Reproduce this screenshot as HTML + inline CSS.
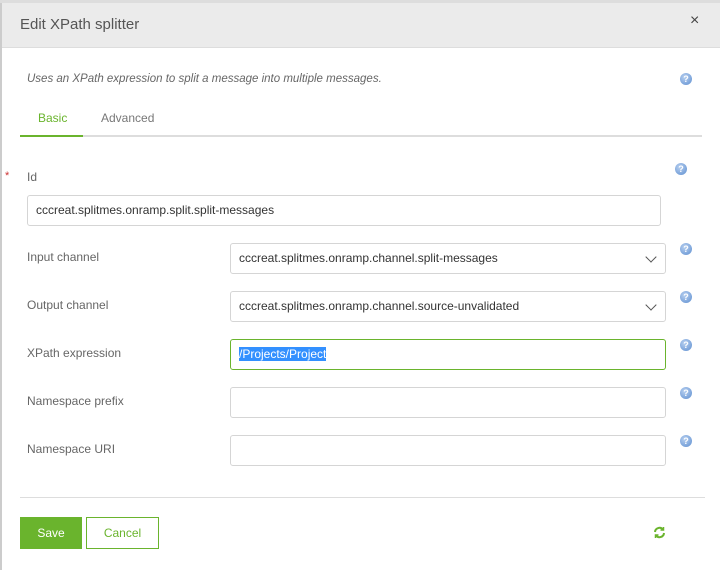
<!DOCTYPE html>
<html><head><style>
body{margin:0;width:720px;height:570px;overflow:hidden;background:#fff;font-family:"Liberation Sans",sans-serif;position:relative}
.a{position:absolute}
.lbl{position:absolute;left:27px;font-size:12px;color:#666}
.inp{position:absolute;border:1px solid #d5d5d5;border-radius:3px;box-sizing:border-box;height:31px;font-size:12px;color:#333;padding:0 8px;line-height:29px}
.h{position:absolute;width:12px;height:12px;border-radius:50%;background:radial-gradient(circle at 40% 35%,#b8d0f0,#5d8ed0);color:#fff;font-size:9px;font-weight:bold;text-align:center;line-height:12px}
.chev{position:absolute;right:10px;top:9px;width:7px;height:7px;border-right:1.5px solid #555;border-bottom:1.5px solid #555;transform:rotate(45deg)}
</style></head><body>
<div class="a" style="left:0;top:0;width:2px;height:570px;background:#ccc"></div>
<div class="a" style="left:0;top:0;width:720px;height:3px;background:#ddd"></div>
<div class="a" style="left:2px;top:3px;width:718px;height:44px;background:#ebebeb;border-bottom:1px solid #ddd"></div>
<div class="a" style="left:20px;top:16px;font-size:15px;color:#555">Edit XPath splitter</div>
<div class="a" style="left:690px;top:12px;font-size:16px;color:#444">×</div>
<div class="a" style="left:27px;top:73px;font-size:11.5px;font-style:italic;color:#666">Uses an XPath expression to split a message into multiple messages.</div>
<div class="h" style="left:680px;top:73px">?</div>
<div class="a" style="left:38px;top:111px;font-size:12px;color:#6ab42d">Basic</div>
<div class="a" style="left:101px;top:111px;font-size:12px;color:#777">Advanced</div>
<div class="a" style="left:20px;top:135px;width:682px;height:2px;background:#ddd"></div>
<div class="a" style="left:20px;top:135px;width:63px;height:2px;background:#6ab42d"></div>
<div class="a" style="left:5px;top:170px;color:#c33;font-size:11px">*</div>
<div class="lbl" style="top:170px">Id</div>
<div class="h" style="left:675px;top:163px">?</div>
<div class="inp" style="left:27px;top:195px;width:634px">cccreat.splitmes.onramp.split.split-messages</div>
<div class="lbl" style="top:250px">Input channel</div>
<div class="inp" style="left:230px;top:243px;width:436px">cccreat.splitmes.onramp.channel.split-messages<div class="chev"></div></div>
<div class="h" style="left:680px;top:243px">?</div>
<div class="lbl" style="top:298px">Output channel</div>
<div class="inp" style="left:230px;top:291px;width:436px">cccreat.splitmes.onramp.channel.source-unvalidated<div class="chev"></div></div>
<div class="h" style="left:680px;top:291px">?</div>
<div class="lbl" style="top:346px">XPath expression</div>
<div class="inp" style="left:230px;top:339px;width:436px;border-color:#6ab42d"><span style="background:#3390ff;color:#fff">/Projects/Project</span></div>
<div class="h" style="left:680px;top:339px">?</div>
<div class="lbl" style="top:394px">Namespace prefix</div>
<div class="inp" style="left:230px;top:387px;width:436px"></div>
<div class="h" style="left:680px;top:387px">?</div>
<div class="lbl" style="top:442px">Namespace URI</div>
<div class="inp" style="left:230px;top:435px;width:436px"></div>
<div class="h" style="left:680px;top:435px">?</div>
<div class="a" style="left:20px;top:497px;width:685px;height:1px;background:#ddd"></div>
<div class="a" style="left:20px;top:517px;width:62px;height:32px;background:#6ab42d;color:#fff;font-size:12px;text-align:center;line-height:32px">Save</div>
<div class="a" style="left:86px;top:517px;width:73px;height:32px;box-sizing:border-box;border:1px solid #6ab42d;color:#6ab42d;font-size:12px;text-align:center;line-height:30px">Cancel</div>
<svg class="a" style="left:653px;top:526px" width="13" height="13" viewBox="0 0 13 13" fill="none" stroke="#6ab42d" stroke-width="2"><path d="M2 6A4.5 4.5 0 0 1 10 3.5"/><path d="M11 7A4.5 4.5 0 0 1 3 9.5"/><path d="M10.5 1v3h-3" stroke-width="1.5"/><path d="M2.5 12V9h3" stroke-width="1.5"/></svg>
</body></html>
